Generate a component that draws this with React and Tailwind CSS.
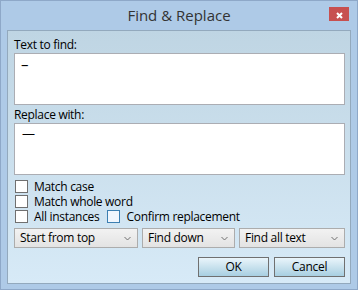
import React from 'react'

const font = { fontFamily: '"Open Sans", "Noto Sans", sans-serif' }

function Check({ label, blue }) {
  return (
    <label className="flex h-[15px] items-center gap-[6px]">
      <span
        className={`block h-[13px] w-[13px] shrink-0 border ${blue ? 'border-[#3c7fb1] bg-[#f0f6fd]' : 'border-[#707070] bg-white'}`}
      />
      <span className="text-[12px] leading-[14px] tracking-[-0.3px] text-[#000]">{label}</span>
    </label>
  )
}

function Drop({ label, width }) {
  return (
    <div
      className={`flex h-[20px] items-center justify-between border border-[#acacac] bg-gradient-to-b from-[#f2f2f2] to-[#e3e3e3] pl-[5px] pr-[5px] ${width}`}
    >
      <span className="text-[12px] leading-[18px] tracking-[-0.3px] text-[#000]">{label}</span>
      <svg width="7" height="5" viewBox="0 0 7 5" className="mr-[1px]">
        <path d="M0.5 1 L3.5 4 L6.5 1" fill="none" stroke="#707070" strokeWidth="1" />
      </svg>
    </div>
  )
}

function Btn({ label }) {
  return (
    <button className="flex h-[20px] w-[71px] items-center justify-center border border-[#707070] bg-gradient-to-b from-[#eaf5fb] to-[#a8cfe1] text-[12px] leading-[18px] tracking-[-0.3px] text-[#000]">
      {label}
    </button>
  )
}

export default function App() {
  return (
    <div style={font} className="relative flex h-[290px] w-[358px] flex-col border border-[#8ea8c8] bg-[#aecae7]">
      {/* Title bar */}
      <div className="h-[29px] text-center text-[15px] leading-[29px] text-[#333]">Find &amp; Replace</div>
      <button className="absolute right-[8px] top-[6px] flex h-[14px] w-[20px] items-center justify-center bg-[#c75050]">
        <svg width="7" height="7" viewBox="0 0 7 7" className="mt-[2px]">
          <path d="M1 1 L6 6 M6 1 L1 6" stroke="#fff" strokeWidth="2" />
        </svg>
      </button>

      <div className="flex flex-1 flex-col px-[6px] pb-[5px]">
        <div className="flex flex-1 flex-col border border-[#93a9bd] bg-gradient-to-b from-[#bfd5e3] to-[#d7eaf7] pb-[6px] pl-[6px] pr-[5px] pt-[6px]">
          <div className="text-[12px] leading-[16px] tracking-[-0.3px] text-[#000]">Text to find:</div>
          <div className="h-[52px] border border-[#abadb3] bg-white px-[6px] pt-[2px] text-[15px] leading-[16px] text-[#000]">–</div>

          <div className="mt-[2px] text-[12px] leading-[16px] tracking-[-0.3px] text-[#000]">Replace with:</div>
          <div className="h-[52px] border border-[#abadb3] bg-white px-[7px] pt-[1px] text-[13px] leading-[16px] text-[#000]">—</div>

          <div className="mt-[4px] flex flex-col pl-[1px]">
            <Check label="Match case" />
            <Check label="Match whole word" />
            <div className="flex items-center gap-[8px]">
              <Check label="All instances" />
              <Check label="Confirm replacement" blue />
            </div>
          </div>

          <div className="mt-[4px] flex gap-[4px]">
            <Drop label="Start from top" width="w-[124px]" />
            <Drop label="Find down" width="w-[93px]" />
            <Drop label="Find all text" width="w-[106px]" />
          </div>

          <div className="mt-auto flex justify-end gap-[5px]">
            <Btn label="OK" />
            <Btn label="Cancel" />
          </div>
        </div>
      </div>
    </div>
  )
}
